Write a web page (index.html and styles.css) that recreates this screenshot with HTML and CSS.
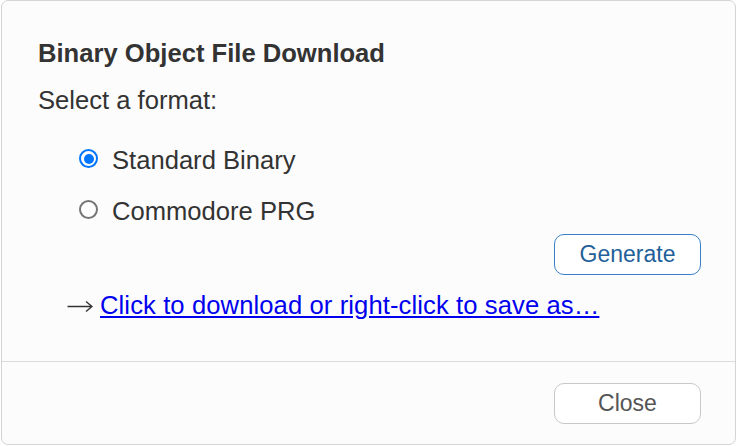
FILE: index.html
```html
<!DOCTYPE html>
<html>
<head>
<meta charset="utf-8">
<link rel="stylesheet" href="styles.css">
</head>
<body>
<div class="dialog">
  <div class="dialog-body">
    <h1 class="title">Binary Object File Download</h1>
    <p class="prompt">Select a format:</p>
    <div class="options">
      <label class="option"><span class="radio checked"></span><span>Standard Binary</span></label>
      <label class="option"><span class="radio"></span><span>Commodore PRG</span></label>
    </div>
    <div class="actions">
      <button class="btn btn-primary">Generate</button>
    </div>
    <div class="download">
      <svg class="arrow" width="26" height="12" viewBox="0 0 26 12" aria-label="→"><path d="M0.5 6.5H24.5M19 1.5L25 6.5L19 11.5" fill="none" stroke="#333333" stroke-width="1.4"/></svg><a href="#" class="link">Click to download or right-click to save as…</a>
    </div>
  </div>
  <div class="dialog-footer">
    <button class="btn btn-secondary">Close</button>
  </div>
</div>
</body>
</html>
```
FILE: styles.css
```css
html, body {
  margin: 0;
  padding: 0;
  background: #ffffff;
}
body {
  font-family: "Liberation Sans", Arial, sans-serif;
  color: #333333;
  padding: 0 1px 1px 1px;
}
.dialog {
  box-sizing: border-box;
  width: 735px;
  height: 445px;
  border: 1px solid #d4d4d4;
  border-radius: 7px;
  background: #fcfcfc;
  display: flex;
  flex-direction: column;
}
.dialog-body {
  box-sizing: border-box;
  height: 361px;
  padding: 36px 34px 0 36px;
  border-bottom: 1px solid #dcdcdc;
}
.title {
  margin: 0;
  font-size: 25.6px;
  line-height: 32px;
  font-weight: bold;
  color: #333333;
}
.prompt {
  margin: 15px 0 0 0;
  font-size: 25.6px;
  line-height: 32px;
}
.options {
  margin: 28px 0 0 41px;
  display: flex;
  flex-direction: column;
  gap: 19px;
}
.option {
  display: flex;
  align-items: center;
  font-size: 25.6px;
  line-height: 32px;
}
.radio {
  box-sizing: border-box;
  width: 19px;
  height: 19px;
  border: 2px solid #767676;
  border-radius: 50%;
  margin: -3px 14px 0 0;
  background: #fff;
  position: relative;
  flex: none;
}
.radio.checked {
  border-color: #0075ff;
}
.radio.checked::after {
  content: "";
  position: absolute;
  left: 2.5px;
  top: 2.5px;
  width: 10px;
  height: 10px;
  border-radius: 50%;
  background: #0075ff;
}
.actions {
  display: flex;
  justify-content: flex-end;
  margin-top: 7px;
}
.btn {
  box-sizing: border-box;
  width: 147px;
  height: 41px;
  border-radius: 10px;
  font-family: "Liberation Sans", Arial, sans-serif;
  font-size: 23px;
  background: #ffffff;
  cursor: pointer;
  padding: 0;
}
.btn-primary {
  border: 1px solid #3a7fc4;
  color: #235f99;
}
.btn-secondary {
  border: 1px solid #c8c8c8;
  color: #555555;
}
.download {
  margin: 14px 0 0 29px;
  font-size: 25.6px;
  line-height: 32px;
  display: flex;
  align-items: center;
}
.arrow {
  flex: none;
  margin: 2px 7px 0 0;
}
.link {
  color: #0000ee;
  text-decoration: underline;
  letter-spacing: 0.1px;
}
.dialog-footer {
  flex: 1;
  display: flex;
  justify-content: flex-end;
  align-items: center;
  padding-right: 34px;
}
```
